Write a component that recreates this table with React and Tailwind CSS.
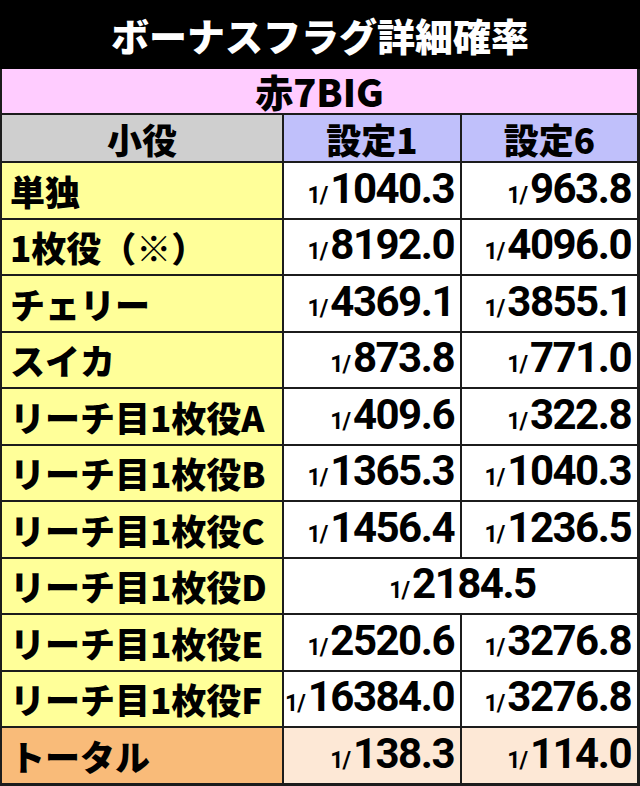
import React from 'react';

const rows = [
  { label: '単独', s1: '1040.3', s6: '963.8' },
  { label: '1枚役（※）', s1: '8192.0', s6: '4096.0' },
  { label: 'チェリー', s1: '4369.1', s6: '3855.1' },
  { label: 'スイカ', s1: '873.8', s6: '771.0' },
  { label: 'リーチ目1枚役A', s1: '409.6', s6: '322.8' },
  { label: 'リーチ目1枚役B', s1: '1365.3', s6: '1040.3' },
  { label: 'リーチ目1枚役C', s1: '1456.4', s6: '1236.5' },
  { label: 'リーチ目1枚役D', both: '2184.5' },
  { label: 'リーチ目1枚役E', s1: '2520.6', s6: '3276.8' },
  { label: 'リーチ目1枚役F', s1: '16384.0', s6: '3276.8' },
];

const jp = "font-['Noto_Sans_CJK_JP','Noto_Sans',sans-serif] font-black";

function Prob({ value }) {
  return (
    <span className="flex items-baseline text-black">
      <span className="font-['Roboto',sans-serif] font-bold text-[23px] mr-[3px] tracking-[-1px]">1/</span>
      <span className="font-['Roboto',sans-serif] font-bold text-[42px] tracking-[-1.5px] leading-none">{value}</span>
    </span>
  );
}

function ValueCell({ value, bg = 'bg-white' }) {
  return (
    <div className={`${bg} flex items-center justify-end pr-[6px]`}>
      <Prob value={value} />
    </div>
  );
}

export default function App() {
  return (
    <div className="w-[640px] h-[786px] bg-[#1c1c1c] flex flex-col overflow-hidden">
      {/* title */}
      <div className={`h-[69px] bg-black text-white ${jp} text-[38px] flex items-center justify-center leading-none`}>
        ボーナスフラグ詳細確率
      </div>

      <div className="flex flex-col gap-[2px] pl-[2px] pr-[3px] pb-[3px]">
        <div className={`h-[44px] bg-[#ffccff] ${jp} text-[38px] flex items-center justify-center leading-none`}>
          赤7BIG
        </div>

        <div className={`h-[46px] grid grid-cols-[280px_176px_1fr] gap-[2px] ${jp} text-[35px] leading-none`}>
          <div className="bg-[#cfcfcf] flex items-center justify-center">小役</div>
          <div className="bg-[#c0c0fb] flex items-center justify-center">設定1</div>
          <div className="bg-[#c0c0fb] flex items-center justify-center">設定6</div>
        </div>

        {rows.map((r) => (
          <div key={r.label} className="h-[54.5px] grid grid-cols-[280px_176px_1fr] gap-[2px]">
            <div className={`bg-[#ffff99] ${jp} text-[35px] leading-none flex items-center pl-[8px]`}>
              {r.label}
            </div>
            {r.both ? (
              <div className="col-span-2 bg-white flex items-center justify-center pl-[4px]">
                <Prob value={r.both} />
              </div>
            ) : (
              <>
                <ValueCell value={r.s1} />
                <ValueCell value={r.s6} />
              </>
            )}
          </div>
        ))}

        <div className="h-[54.5px] grid grid-cols-[280px_176px_1fr] gap-[2px]">
          <div className={`bg-[#f9bb79] ${jp} text-[35px] leading-none flex items-center pl-[8px]`}>
            トータル
          </div>
          <ValueCell value="138.3" bg="bg-[#fde8d6]" />
          <ValueCell value="114.0" bg="bg-[#fde8d6]" />
        </div>
      </div>
    </div>
  );
}
